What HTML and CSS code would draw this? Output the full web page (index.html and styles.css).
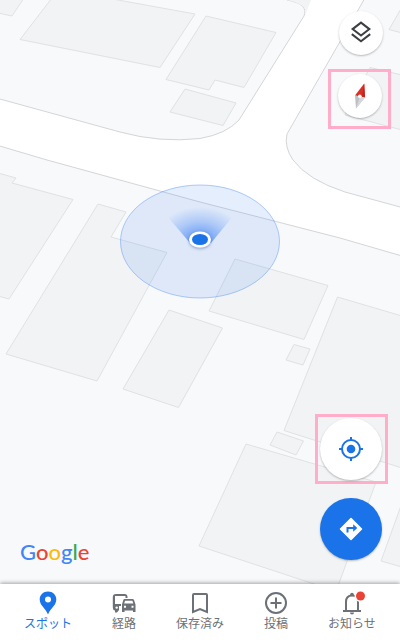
FILE: index.html
```html
<!DOCTYPE html>
<html lang="ja">
<head>
<meta charset="utf-8">
<meta name="viewport" content="width=device-width, initial-scale=1">
<title>マップ</title>
<link rel="stylesheet" href="styles.css">
</head>
<body>
<main class="map">
  <svg class="map-canvas" viewBox="0 0 400 584" preserveAspectRatio="xMidYMid slice" aria-hidden="true">
    <defs>
      <radialGradient id="beam" gradientUnits="userSpaceOnUse" cx="0" cy="0" r="1" gradientTransform="translate(200 242) scale(46 35)">
        <stop offset="0.2" stop-color="#4285f4" stop-opacity="0.7"/>
        <stop offset="0.6" stop-color="#4285f4" stop-opacity="0.3"/>
        <stop offset="1" stop-color="#4285f4" stop-opacity="0"/>
      </radialGradient>
      <filter id="soft" x="-50%" y="-50%" width="200%" height="200%">
        <feDropShadow dx="0" dy="1" stdDeviation="1.5" flood-color="#1a3c80" flood-opacity="0.5"/>
      </filter>
    </defs>
    <g class="land">
      <path d="M-2 98.500L120 132Q160 143 200 138.500Q226 134 239 120L304 16Q309 4 287 0V-2H-2Z"/>
      <path d="M365 -2L287 134Q284 147 293 160Q308 180 345 192L402 207.500V-2Z"/>
      <path d="M-2 145.500L47 160L200 202L274 221L340 238L402 256V586H-2Z"/>
    </g>
    <path class="patch" d="M287 0H311L306 13Q306 4 287 0Z"/>
    <g class="building">
      <path d="M-2 13L12 16L24 -2H-2Z"/>
      <path d="M52 -2L20 39.500L160 67.500L195 14L107 -2Z"/>
      <path d="M206 16L276 32.500L244 87.500L215 80L209 90L166 79.500Z"/>
      <path d="M185 89L236 103L223 125.500L170 112Z"/>
      <path d="M402 7L389 29.500L402 33Z"/>
      <path d="M370 67.500L402 75V130L345 115Z"/>
      <path d="M-2 173L16 178L12 183L73 199.500L9 299L-2 296Z"/>
      <path d="M98 204L126 212L111 237L167 252.500L97 381L6 354Z"/>
      <path d="M169 310L222.500 328L178.500 407.500L123 389Z"/>
      <path d="M235 259L328 285.500L304 339.500L209 311Z"/>
      <path d="M294 344.500L310 349L303 365L286 360Z"/>
      <path d="M337.500 297L402 316V468L284 430.500Z"/>
      <path d="M277 432L303.500 441L296 455L270 445Z"/>
      <path d="M246 444L376 482L338 586H320L199 546Z"/>
      <path d="M402 503L381 561L402 567Z"/>
    </g>
    <ellipse class="accuracy" cx="200" cy="241.500" rx="79.500" ry="56.500"/>
    <path fill="url(#beam)" d="M190 243L161 209Q200 200 239 209L211 243Z"/>
    <ellipse cx="200" cy="239.500" rx="11" ry="8" fill="#fff" filter="url(#soft)"/>
    <ellipse cx="200" cy="239.500" rx="8" ry="5.500" fill="#1a73e8"/>
  </svg>

  <div class="tools tools-top">
    <button class="round round-small" type="button" aria-label="レイヤ">
      <svg width="24" height="24" viewBox="0 0 24 24" fill="none" stroke="#3c4043" stroke-width="2"><path d="M12 1.600L20.400 8.100L12 14.600L3.600 8.100Z"/><path d="M2.800 13.100L12 20.200L21.200 13.100"/></svg>
    </button>
    <div class="mark mark-compass">
      <button class="round round-small" type="button" aria-label="コンパス">
        <svg width="12" height="28" viewBox="0 0 12 28"><path fill="#d93025" d="M10.200 1.500L11 15.500L6 14.500L1 13.500Z"/><path fill="#c5221f" d="M10.200 1.500L8 14.500L11 15.500Z"/><path fill="#bdc1c6" d="M1 13.500L11 15.500L2 26.500Z"/><path fill="#d5d7da" d="M6 14.500L11 15.500L2 26.500Z"/><circle cx="5.800" cy="14.200" r="1.800" fill="#fff"/></svg>
      </button>
    </div>
  </div>

  <div class="map-footer">
    <div class="logo"><span class="b">G</span><span class="r">o</span><span class="y">o</span><span class="b">g</span><span class="g">l</span><span class="r">e</span></div>
    <div class="tools tools-bottom">
      <div class="mark mark-locate">
        <button class="round round-large" type="button" aria-label="現在地">
          <svg width="26" height="26" viewBox="0 0 26 26" fill="none" stroke="#1a73e8" stroke-width="2"><circle cx="13" cy="13" r="9"/><circle cx="13" cy="13" r="4.300" fill="#1a73e8" stroke="none"/><path d="M13 1V4M13 22V25M1 13H4M22 13H25"/></svg>
        </button>
      </div>
      <button class="round round-large round-primary" type="button" aria-label="経路を検索">
        <svg width="24" height="24" viewBox="0 0 24 24"><path fill="#fff" stroke="#fff" stroke-width="1.500" stroke-linejoin="round" d="M12 1.500L22.500 12L12 22.500L1.500 12Z"/><path fill="none" stroke="#1a73e8" stroke-width="2" d="M8.500 15.500V11H15"/><path fill="#1a73e8" d="M14.200 7.200L18.300 11L14.200 14.800Z"/></svg>
      </button>
    </div>
  </div>
</main>

<nav class="tabs">
  <a class="tab tab-active" href="#spot" aria-current="page">
    <svg width="24" height="24" viewBox="0 0 24 24"><path fill="currentColor" fill-rule="evenodd" d="M12 .5C7.300 .5 3.700 4 3.700 8.500C3.700 14.500 9.500 17 12 23.500C14.500 17 20.300 14.500 20.300 8.500C20.300 4 16.700 .5 12 .5ZM12 5.500A3 3 0 1 1 12 11.500A3 3 0 1 1 12 5.500Z"/></svg>
    <span>スポット</span>
  </a>
  <a class="tab" href="#commute">
    <svg width="24" height="24" viewBox="0 0 24 24" fill="currentColor"><path d="M4 3H12.500Q15.500 3 15.500 6V7H13.500V5H3V13H9V15H7V19L5 21.500H3V19.500Q.8 19 .8 16.500V6Q.8 3 4 3Z"/><circle cx="4.700" cy="16.600" r="1.200" fill="#fff"/><path fill-rule="evenodd" d="M12.500 8H20.500Q21.500 8 22 9L23.500 13.500V21H21V19.500H12.500V21H10V13.500L11.300 9Q11.600 8 12.500 8ZM13 9.700L12.200 12.500H21.300L20.400 9.700ZM12 14.700V16.700H14V14.700ZM19.500 14.700V16.700H21.500V14.700Z"/></svg>
    <span>経路</span>
  </a>
  <a class="tab" href="#saved">
    <svg width="24" height="24" viewBox="0 0 24 24" fill="none" stroke="currentColor" stroke-width="2"><path d="M5 21V4Q5 3 6 3H18Q19 3 19 4V21L12 18Z"/></svg>
    <span>保存済み</span>
  </a>
  <a class="tab" href="#contribute">
    <svg width="24" height="24" viewBox="0 0 24 24" fill="none" stroke="currentColor" stroke-width="2"><circle cx="12" cy="12" r="10"/><path d="M12 6.500V17.500M6.500 12H17.500"/></svg>
    <span>投稿</span>
  </a>
  <a class="tab" href="#updates">
    <svg width="24" height="24" viewBox="0 0 24 24"><path fill="none" stroke="currentColor" stroke-width="2" d="M3 20H21M6 20V11Q6 4.500 12 4.500Q18 4.500 18 11V20"/><circle cx="12" cy="3.500" r="1.800" fill="currentColor"/><path fill="currentColor" d="M10 21.500H14Q14 23.500 12 23.500Q10 23.500 10 21.500Z"/><circle cx="20.500" cy="5" r="6" fill="#fff"/><circle cx="20.500" cy="5" r="4.500" fill="#ea4335"/></svg>
    <span>お知らせ</span>
  </a>
</nav>
</body>
</html>
```
FILE: styles.css
```css
* {
  box-sizing: border-box;
}

body {
  margin: 0;
  min-height: 100vh;
  display: flex;
  flex-direction: column;
  font-family: "Noto Sans CJK JP", sans-serif;
  background: #fff;
}

.map {
  position: relative;
  flex: 1;
  display: flex;
  flex-direction: column;
  justify-content: space-between;
  padding: 11px 12px 24px 20px;
  overflow: hidden;
}

.map-canvas {
  position: absolute;
  inset: 0;
  width: 100%;
  height: 100%;
}

.land {
  fill: #f8f9fb;
  stroke: #d3d5d8;
}

.patch {
  fill: #f1f3f4;
}

.building {
  fill: #f1f3f4;
  stroke: #e0e1e3;
}

.accuracy {
  fill: rgba(66, 133, 244, 0.14);
  stroke: rgba(66, 133, 244, 0.4);
}

.tools {
  position: relative;
  display: flex;
  flex-direction: column;
  gap: 14px;
}

.tools-top {
  align-self: flex-end;
  align-items: flex-end;
  margin-right: -3px;
}

.tools-top > .round {
  margin-right: 8px;
}

.tools-bottom {
  align-items: flex-start;
}

.tools-bottom > .round {
  margin-left: 5px;
}

.mark {
  display: grid;
  place-items: center;
  border: 3px solid #ffadc8;
}

.mark-compass {
  width: 63px;
  height: 60px;
  padding: 0 0 6px 1px;
}

.mark-locate {
  width: 73px;
  height: 70px;
  padding-right: 1px;
}

.round {
  display: grid;
  place-items: center;
  padding: 0;
  border: 0;
  border-radius: 50%;
  background: #fff;
  box-shadow: 0 1px 2px rgba(60, 64, 67, 0.35);
  cursor: pointer;
}

.round-small {
  width: 44px;
  height: 44px;
}

.round-large {
  width: 62px;
  height: 62px;
}

.round-primary {
  background: #1a73e8;
}

.map-footer {
  position: relative;
  display: flex;
  align-items: flex-end;
  justify-content: space-between;
}

.logo {
  margin-bottom: -4px;
  font-family: Lato, sans-serif;
  font-size: 22px;
  font-weight: 500;
  line-height: 24px;
}

.b {
  color: #4285f4;
}

.r {
  color: #ea4335;
}

.y {
  color: #fbbc05;
}

.g {
  color: #34a853;
}

.tabs {
  position: relative;
  display: flex;
  height: 56px;
  padding: 7px 10px 0;
  background: #fff;
  box-shadow: 0 -1px 4px rgba(0, 0, 0, 0.35);
}

.tab {
  flex: 1;
  display: flex;
  flex-direction: column;
  align-items: center;
  color: #6b7177;
  font-size: 12px;
  line-height: 16px;
  text-decoration: none;
  white-space: nowrap;
}

.tab svg {
  overflow: visible;
}

.tab-active {
  color: #1a73e8;
}
```
